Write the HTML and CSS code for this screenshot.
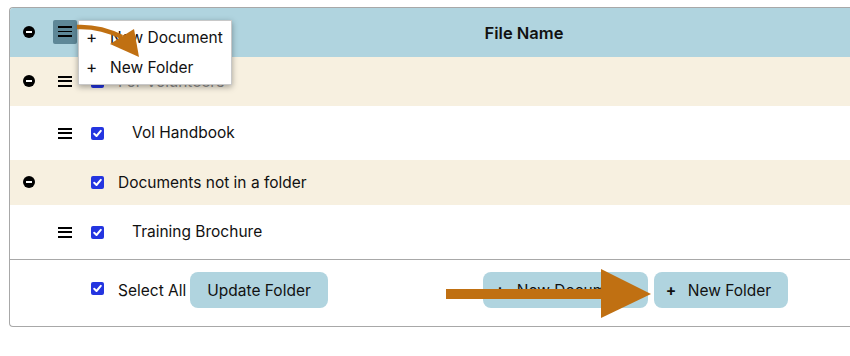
FILE: index.html
```html
<!DOCTYPE html>
<html lang="en">
  <head>
    <meta charset="UTF-8" />
    <title>Folders</title>
    <link rel="stylesheet" href="styles.css">
  </head>
  <body>
    <div class="table">
      <div class="row header">
        <span class="minus"></span>
        <span class="burger-box"><span class="burger"></span></span>
        <span></span>
        <span class="title">File Name</span>
      </div>
      <div class="row folder first">
        <span class="minus"></span>
        <span class="burger"></span>
        <span class="check"></span>
        <span class="name faded">For Volunteers</span>
      </div>
      <div class="row doc">
        <span></span>
        <span class="burger"></span>
        <span class="check"></span>
        <span class="name">Vol Handbook</span>
      </div>
      <div class="row folder">
        <span class="minus"></span>
        <span></span>
        <span class="check"></span>
        <span class="name">Documents not in a folder</span>
      </div>
      <div class="row doc">
        <span></span>
        <span class="burger"></span>
        <span class="check"></span>
        <span class="name">Training Brochure</span>
      </div>
      <div class="footer">
        <span class="check"></span>
        <span class="label">Select All</span>
        <button class="btn">Update Folder</button>
        <button class="btn new-doc"><span class="plus">+</span>New Document</button>
        <button class="btn new-folder"><span class="plus">+</span>New Folder</button>
      </div>
    </div>

    <div class="menu">
      <div class="item"><span class="plus">+</span>New Document</div>
      <div class="item"><span class="plus">+</span>New Folder</div>
    </div>

    <svg class="arrows" width="850" height="356" viewBox="0 0 850 356">
      <path d="M77 27 Q100 26 122 37" fill="none" stroke="#c07012" stroke-width="4.5" />
      <polygon points="110,44 134,29 139,57" fill="#c07012" />
      <rect x="446" y="289" width="158" height="10" fill="#c07012" />
      <polygon points="601,269 601,318 651,294" fill="#c07012" />
    </svg>

    <script>
      document.querySelectorAll(".check").forEach((box) => {
        box.innerHTML =
          '<svg width="13" height="13" viewBox="0 0 13 13"><path d="M3.2 6.8 L5.5 9 L9.8 3.8" fill="none" stroke="#fff" stroke-width="2" stroke-linecap="round" stroke-linejoin="round"/></svg>';
      });
    </script>
  </body>
</html>
```

FILE: styles.css
```css
body {
  margin: 0;
  font-family: Inter, "Liberation Sans", sans-serif;
  color: #111;
  background: #fff;
  overflow: hidden;
  width: 850px;
  height: 356px;
  position: relative;
}
.table {
  margin: 7px 0 0 9px;
  width: 841px;
  box-sizing: border-box;
  border: 1px solid #a8a8a8;
  border-right: none;
  border-radius: 4px 0 0 4px;
  overflow: hidden;
}
.row {
  display: grid;
  grid-template-columns: 35px 33px 27px 1fr;
  align-items: center;
  padding-left: 13px;
  font-size: 15.5px;
}
.header {
  height: 49px;
  background: #b0d4df;
}
.folder {
  height: 45px;
  background: #f7f0e0;
}
.folder.first {
  height: 49px;
}
.doc {
  height: 54px;
  background: #fff;
}
.title {
  text-align: center;
  padding-left: 80px;
  font-weight: 600;
  font-size: 16.5px;
}
.name {
  padding-bottom: 1px;
}
.doc .name {
  padding-left: 14px;
}
.faded {
  color: #8a8a8a;
}
.minus {
  width: 12px;
  height: 12px;
  border-radius: 50%;
  background: #000;
  position: relative;
  margin-top: -2px;
}
.minus::after {
  content: "";
  position: absolute;
  left: 3px;
  top: 5px;
  width: 6px;
  height: 2px;
  background: #fff;
}
.burger {
  display: block;
  width: 14px;
  height: 11px;
  background: linear-gradient(#000 0 2px, transparent 2px 4.5px, #000 4.5px 6.5px, transparent 6.5px 9px, #000 9px 11px);
}
.burger-box {
  width: 24px;
  height: 24px;
  margin-left: -5px;
  margin-top: -2px;
  background: #5e8797;
  border-radius: 2px;
  display: flex;
  align-items: center;
  justify-content: center;
}
.check {
  width: 13px;
  height: 13px;
  background: #2435e0;
  border-radius: 2px;
  display: block;
}
.check svg {
  display: block;
}
.footer {
  border-top: 1px solid #a8a8a8;
  height: 67px;
  display: flex;
  align-items: flex-start;
  padding: 12px 0 0 81px;
  box-sizing: border-box;
  font-size: 15.5px;
}
.footer .check {
  margin-top: 10px;
}
.footer .label {
  margin: 9px 4px 0 14px;
}
.btn {
  height: 36px;
  border: none;
  border-radius: 8px;
  background: #b0d4df;
  font-family: inherit;
  font-size: 15.5px;
  color: #111;
  padding: 0 17px;
  white-space: nowrap;
}
.new-doc {
  margin-left: 155px;
  width: 165px;
  padding-left: 12px;
  text-align: left;
}
.new-folder {
  margin-left: 6px;
  width: 134px;
  padding-left: 12px;
  text-align: left;
}
.plus {
  font-weight: 700;
  display: inline-block;
  width: 22px;
}
.menu {
  position: absolute;
  left: 78px;
  top: 20px;
  width: 152px;
  background: #fff;
  border: 1px solid #c8c8c8;
  box-shadow: 0 2px 6px rgba(0, 0, 0, 0.35);
  font-size: 15.5px;
  padding: 1px 0 2px;
}
.menu .item {
  height: 30px;
  display: flex;
  align-items: center;
  padding-left: 7px;
}
.menu .plus {
  font-weight: 400;
  font-size: 17px;
  width: 24px;
}
.arrows {
  position: absolute;
  left: 0;
  top: 0;
  pointer-events: none;
}
```
